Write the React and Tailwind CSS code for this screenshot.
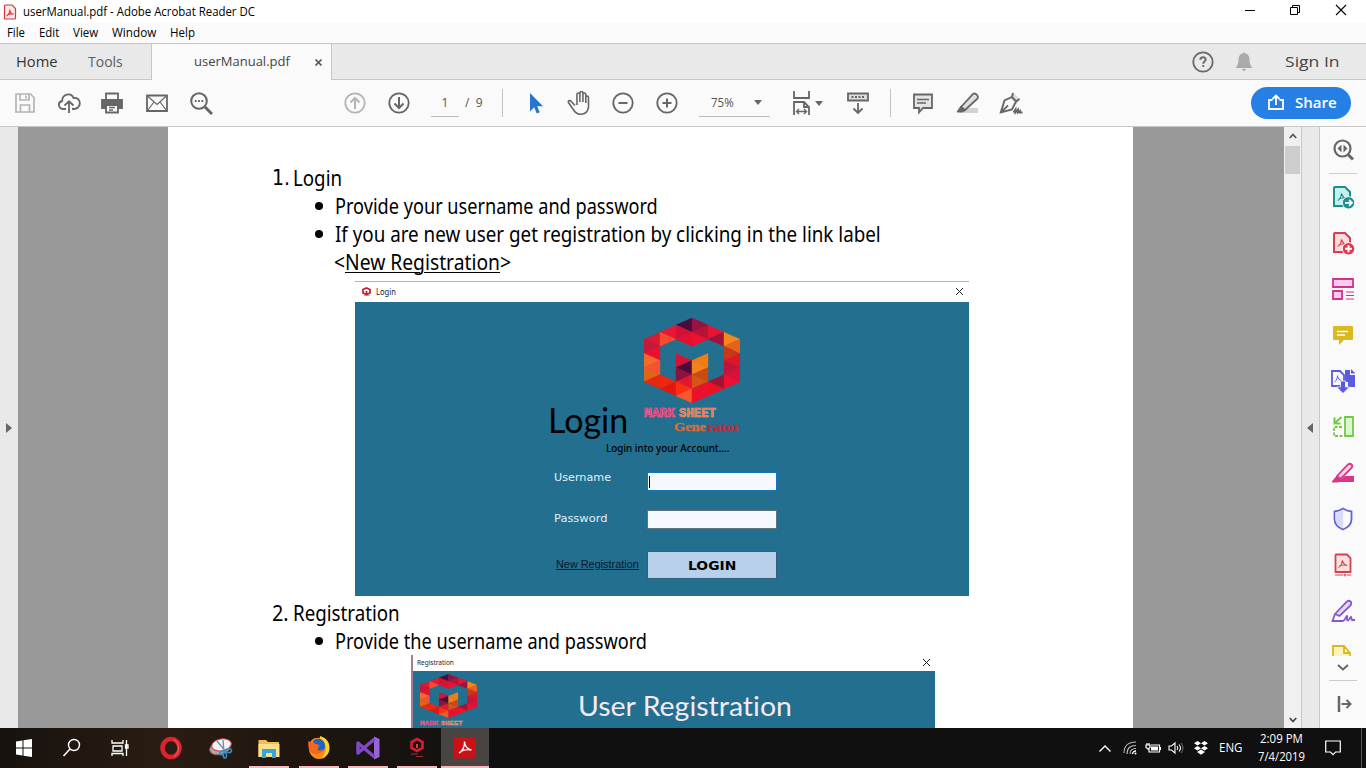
import { useLayoutEffect, useRef, useState } from "react";

/* Single line of text condensed or widened to fill the width of its box. */
function Fit({ className = "", textClass = "", children }) {
  const box = useRef(null);
  const line = useRef(null);
  const [scale, setScale] = useState(1);
  useLayoutEffect(() => {
    setScale(box.current.clientWidth / line.current.offsetWidth);
  }, []);
  return (
    <span ref={box} className={"block shrink-0 whitespace-nowrap " + className}>
      <span ref={line} className={"inline-block origin-left " + textClass} style={{ transform: `scaleX(${scale})` }}>
        {children}
      </span>
    </span>
  );
}

function Svg({ children, className = "size-6", box = "0 0 24 24" }) {
  return (
    <svg viewBox={box} className={"block shrink-0 " + className} fill="none" stroke="currentColor" strokeWidth="1.8">
      {children}
    </svg>
  );
}

const Squiggle = ({ t = "" }) => (
  <path transform={t} strokeWidth="1.1" d="M7.2 15.5c2-1 3.4-3.500 3.800-7.300M11 8.500c.8 2.700 2.500 4.600 5 5.200M8 14.300c2-1.200 5-1.600 8-.8" />
);

const LOGO = [
  { 3: "#d81a35", 4: "#c61938", 5: "#f20d2f", 6: "#f36b2a", 7: "#fa5030", 8: "#e16614", 9: "#e5280f" },
  { 2: "#ea1535", 3: "#f94a2f", 9: "#ef2710", 10: "#e0190f" },
  { 1: "#4c0b3b", 2: "#d01334", 3: "#e3102f", 6: "#d61334", 7: "#4c0b3b", 8: "#8e1338", 9: "#e0182f", 10: "#fa3010", 11: "#f4582c" },
  { 1: "#99123f", 2: "#b71238", 3: "#ee0f32", 6: "#f47a12", 7: "#f6801b", 8: "#c94b13", 9: "#d45612", 10: "#e9132e", 11: "#ee0f28" },
  { 2: "#e51435", 3: "#9e1336", 9: "#a01335", 10: "#ef1025" },
  { 3: "#f7871a", 4: "#e8601b", 5: "#c93718", 6: "#df1528", 7: "#c3133d", 8: "#d8103a", 9: "#ed1033" },
];
const W = 16;
const H = 7.08;

function Logo({ className }) {
  return (
    <svg viewBox="0 0 96 116" preserveAspectRatio="none" className={"block " + className}>
      {LOGO.flatMap((strip, c) =>
        Object.entries(strip).map(([k, color]) => {
          const m = Number(k);
          const leftSide = (m + c) % 2 === 0;
          const a = leftSide ? c : c + 1;
          const b = leftSide ? c + 1 : c;
          return (
            <polygon
              key={c + "-" + m}
              fill={color}
              stroke={color}
              strokeWidth=".4"
              points={`${a * W},${(m - 1) * H} ${a * W},${(m + 1) * H} ${b * W},${m * H}`}
            />
          );
        })
      )}
      <g className="font-['Liberation_Mono'] text-[12px] font-bold" strokeWidth=".6">
        <text x="0" y="99" textLength="31" lengthAdjust="spacingAndGlyphs" fill="#d92b6c" stroke="#ee6b9a">MARK</text>
        <text x="35" y="99" textLength="37" lengthAdjust="spacingAndGlyphs" fill="#e0745a" stroke="#f09a70">SHEET</text>
      </g>
      <g className="font-['Liberation_Serif'] text-[12px] font-bold">
        <text x="30" y="112.500" textLength="32" lengthAdjust="spacingAndGlyphs" fill="#dd6a38" stroke="#dd6a38" strokeWidth=".4">Gene</text>
        <text x="63" y="112.500" textLength="33" lengthAdjust="spacingAndGlyphs" fill="#b3303f" stroke="#b3303f" strokeWidth=".4">rator</text>
      </g>
    </svg>
  );
}

/* Short variant of the logo: the hexagon and its first caption line only. */
function LogoTop({ className }) {
  return (
    <div className={"overflow-hidden " + className}>
      <Logo className="h-[60px] w-[57px]" />
    </div>
  );
}

function TitleBar() {
  return (
    <div className="flex h-[23px] items-center bg-white pl-[3px] text-[12px] text-black">
      <Svg className="h-4 w-3.5 text-[#d8343f]" box="0 0 14 16">
        <path fill="#fde9e9" strokeWidth="1.200" d="M2.500 1h6.500l3.500 3.500V14q0 1-1 1h-9q-1 0-1-1V2q0-1 1-1Z" />
        <path strokeWidth="1.100" d="M3.500 12c2-.8 3.500-4 3.300-6.500M6.800 6c.2 2.500 2 4 4 4.300M4 11.200c2-1.200 4-1.600 6.500-1.200" />
      </Svg>
      <Fit className="ml-[6px] w-[232px]">userManual.pdf - Adobe Acrobat Reader DC</Fit>
      <div className="-mt-1 ml-auto flex items-center pr-[19px]">
        <Svg className="size-3 text-black" box="0 0 12 12"><path strokeWidth="1" d="M1 6.500h10" /></Svg>
        <Svg className="ml-[33px] size-3 text-black" box="0 0 12 12"><path strokeWidth="1" d="M1.500 3.500h7v7h-7zM3.500 3.500v-2h7v7h-2" /></Svg>
        <Svg className="ml-[34px] size-3 text-black" box="0 0 12 12"><path strokeWidth="1.100" d="m1 1 10 10M11 1 1 11" /></Svg>
      </div>
    </div>
  );
}

function MenuBar() {
  return (
    <div className="flex h-5 items-center bg-[#fbfbfb] pl-[7px] text-[12px] text-black">
      <Fit className="w-[18px]">File</Fit>
      <Fit className="ml-[14px] w-5">Edit</Fit>
      <Fit className="ml-[14px] w-[25px]">View</Fit>
      <Fit className="ml-[14px] w-[44px]">Window</Fit>
      <Fit className="ml-[14px] w-[25px]">Help</Fit>
    </div>
  );
}

function TabBar() {
  return (
    <div className="flex h-[37px] border-y border-[#c6c6c6] bg-[#e9e9e9] text-[#444]">
      <div className="flex w-[152px] items-center border-r border-[#c6c6c6] pl-4 text-[14px]">
        <Fit className="w-[42px] text-[#333]">Home</Fit>
        <Fit className="ml-[30px] w-[35px] text-[#5c5c5c]">Tools</Fit>
      </div>
      <div className="-mb-px flex w-[180px] items-center border-r border-[#c6c6c6] bg-[#fafafa] pl-[42px] text-[13px]">
        <Fit className="w-[96px]">userManual.pdf</Fit>
        <Svg className="ml-[24px] size-[9px] text-[#555]" box="0 0 9 9"><path strokeWidth="1.700" d="m1.500 1.500 6 6M7.500 1.500l-6 6" /></Svg>
      </div>
      <div className="ml-auto flex items-center">
        <Svg className="size-6 text-[#6a6a6a]"><circle cx="12" cy="12" r="9.700" /><path strokeWidth="1.900" d="M9.300 9.800c.1-3.400 5.400-3.400 5.400-.3 0 2-2.500 1.900-2.500 4.300M12.200 15v2" /></Svg>
        <Svg className="ml-[17px] size-6 text-[#aaa]"><path fill="currentColor" stroke="none" d="M10.500 3.500q1.500-2 3 0c3 .8 4 3 4 6 0 4 .8 6 3 8.500h-17c2.200-2.500 3-4.500 3-8.500 0-3 1-5.200 4-6ZM9.700 19h4.600q-2.300 4-4.600 0Z" /></Svg>
        <Fit className="mr-[26px] ml-[29px] w-[55px] text-[15px] text-[#444]">Sign In</Fit>
      </div>
    </div>
  );
}

const Caret = ({ className }) => (
  <Svg className={"h-[5px] w-2 text-[#666] " + className} box="0 0 8 5"><path fill="currentColor" stroke="none" d="M0 0h8L4 5Z" /></Svg>
);

function Toolbar() {
  return (
    <div className="flex h-[47px] items-center border-b border-[#c8c8c8] bg-[#fafafa] pl-[13px] text-[#666]">
      <div className="flex gap-5">
        <Svg className="size-6 text-[#b4b4b4]"><path strokeWidth="1.700" d="M3 3h14.500L21 6.500V21H3ZM7 3v6h9V3M13 4.500v3M7.500 21v-7h9v7" /></Svg>
        <Svg><path d="M9 18H6c-5-.5-5.600-7-.8-8C5 3 14 1 16.500 7c6-1.200 8 6 4.500 9.300-1 1.200-2.500 1.700-6 1.700M12 22V11M7.500 14.500 12 10.300l4.500 4.200" /></Svg>
        <Svg className="ml-[-1px] size-6"><path fill="currentColor" d="M2 9h20v8h-4v-3H6v3H2Z" /><path d="M6 8V2.500h12V8M6 14v7.500h12V14" /><path strokeWidth="1.300" d="M9 16.500h6M9 19h4" /></Svg>
        <Svg className="ml-px size-6"><path d="M2 4.500h20v15.500H2Z" /><path strokeWidth="1.200" d="m2.500 5 9.500 8.500L21.500 5M2.500 19.500 9 11M21.500 19.500 15 11" /></Svg>
        <Svg><circle cx="10" cy="10" r="7.800" strokeWidth="2" /><path strokeWidth="3" d="m16 16 7 7" /><path strokeWidth="1.800" d="M5.800 10h1.800m1.500 0h1.800m1.500 0h1.800" /></Svg>
      </div>
      <Svg className="ml-[130px] size-6 text-[#b4b4b4]"><circle cx="12" cy="12" r="9.700" /><path strokeWidth="2" d="M12 18V7M7.500 11.500 12 7l4.500 4.500" /></Svg>
      <Svg className="ml-5 size-6"><circle cx="12" cy="12" r="9.700" /><path strokeWidth="2" d="M12 6v11M7.500 12.500 12 17l4.500-4.500" /></Svg>
      <div className="ml-5 flex h-7 w-7 justify-center border-b border-[#bbb] pt-[5px] text-[12px] leading-[18px] text-[#555]">1</div>
      <Fit className="ml-[6px] w-[18px] text-[12px] text-[#555]">/&nbsp; 9</Fit>
      <div className="ml-[19px] h-7 w-px bg-[#c4c4c4]" />
      <Svg className="ml-5 size-6 text-[#2775cf]"><path fill="currentColor" stroke="none" d="M7 2v18.500l4.200-4.200 2.600 6.200 3-1.300-2.700-5.900H20Z" /></Svg>
      <Svg className="ml-5 size-6"><path strokeWidth="1.600" d="M8 14.500 4 10.200c-1.200-1.300-3.500-.2-2.400 1.500L7 19.500c2 3 4 4 7.500 3.700 4-.3 6.500-3 7-7V6.500c0-2-2.700-2-2.700 0V12 3.500c0-2-2.900-2-2.900 0V11 2c0-2-3-2-3 0v9V3.500c0-2-3-2-3 0L10 14" /></Svg>
      <Svg className="ml-5 size-6"><circle cx="12" cy="12" r="9.700" /><path strokeWidth="2" d="M7.500 12h9" /></Svg>
      <Svg className="ml-5 size-6"><circle cx="12" cy="12" r="9.700" /><path strokeWidth="2" d="M7.500 12h9M12 7.500v9" /></Svg>
      <div className="ml-5 flex h-7 w-[71px] items-center border-b border-[#bbb] pl-3">
        <Fit className="w-[23px] text-[12px] text-[#555]">75%</Fit>
        <Caret className="ml-5" />
      </div>
      <Svg className="ml-5 size-6"><path d="M4 0v7h15V0M4 24V11h10l5 5v8M14 11v5h5" /><path strokeWidth="1.400" d="M7 20.500h9M9 18l-2.500 2.500L9 23M14 18l2.500 2.500L14 23" /></Svg>
      <Caret className="ml-px" />
      <Svg className="ml-[23px] size-6"><path fill="#ddd" d="M2 2.500h20v7H2Z" /><path d="M12 12v10M7.500 17.500 12 22l4.500-4.500" /><path strokeWidth="2" strokeDasharray="2 1.500" d="M5.500 6h13.500" /></Svg>
      <div className="ml-5 h-7 w-px bg-[#c4c4c4]" />
      <Svg className="ml-5 size-6"><path fill="#e4e4e4" d="M3 3.500h18v13.500H12l-4 4.500V17H3Z" /><path strokeWidth="1.300" d="M6 8.500h12M6 12h9" /></Svg>
      <Svg className="ml-5 size-6"><path stroke="none" fill="#d2d2d2" d="M10 17h13v5H5Z" /><path fill="#dedede" d="M6 16 18 3q2-1.500 4 1t0 4L10 19Z" /><path fill="currentColor" strokeWidth="1" d="m6 15 4.500 4.500L7 21H2Z" /></Svg>
      <Svg className="ml-5 size-6"><path fill="#dcdcdc" stroke="none" d="m14 2 7 6-3 5-8-6Z" /><path strokeWidth="1.900" d="M14 2 13 6l4 4.500 3.500-2.500M13 6 5.500 9.500 1.800 21.500 13 18.500l4-8M2 21.300l7-7M14.500 21.500l2-3v3l2.500-3v3l2-1.500v1.500h2.500" /></Svg>
      <button className="ml-[228px] flex h-8 w-[100px] items-center rounded-full bg-[#267fe5] pl-[17px] text-white">
        <Svg className="-mt-0.5 size-4" box="0 0 16 16"><path d="M4.500 6H1v9h14V6h-3.500M8 11V2M4.500 5 8 1.500 11.500 5" /></Svg>
        <Fit className="-mt-0.5 ml-[9px] w-[42px] text-[14px] font-semibold">Share</Fit>
      </button>
    </div>
  );
}

const Close = ({ className }) => (
  <Svg className={"size-[7px] text-[#222] " + className} box="0 0 7 7"><path strokeWidth="1" d="m0 0 7 7M7 0 0 7" /></Svg>
);

function Bullet({ children, className }) {
  return (
    <div className="flex h-7 items-center pl-[42px]">
      <span className="mr-[12px] ml-[0.5px] size-2 rounded-full bg-black" />
      <Fit className={className}>{children}</Fit>
    </div>
  );
}

function LoginShot() {
  return (
    <div className="mt-[6px] ml-[83px] flex h-[315px] w-[614px] flex-col border-t border-[#d3a0b0] bg-white">
      <div className="flex h-5 shrink-0 items-center pl-[7px]">
        <Svg className="-mt-0.5 size-[9px] text-[#c4202f]" box="0 0 9 9"><path strokeWidth="1.800" d="M4.500 1 8 2.500V6L4.500 7.500 1 6V2.500ZM4.500 4v3" /><path strokeWidth=".6" d="M2 8.700h6" /></Svg>
        <Fit className="ml-[5px] w-[20px] text-[8px] text-[#222]">Login</Fit>
        <Close className="-mt-0.5 mr-[6px] ml-auto" />
      </div>
      <div className="grow bg-[#226f90] pt-4">
        <div className="flex h-[118px]">
          <Fit className="mt-[81px] ml-[193px] w-[80px] font-['Lato'] text-[34px] leading-[42px] text-black">Login</Fit>
          <Logo className="ml-4 h-[116px] w-[96px]" />
        </div>
        <Fit className="mt-[4px] ml-[251px] w-[123px] text-[11px] leading-4 font-medium text-black">Login into your Account....</Fit>
        <div className="mt-4 flex pl-[199px] font-['DejaVu_Sans'] text-[11px] text-[#e5f0f5]">
          <Fit className="-mt-0.5 w-[57px] leading-4">Username</Fit>
          <div className="ml-[36px] flex h-[19px] w-[130px] items-center border border-[#1475bb] bg-[#f5f8fd] pl-px"><span className="h-3 w-px bg-black" /></div>
        </div>
        <div className="mt-[19px] flex pl-[199px] font-['DejaVu_Sans'] text-[11px] text-[#e5f0f5]">
          <Fit className="mt-px w-[53px] leading-4">Password</Fit>
          <div className="ml-[40px] h-[19px] w-[130px] border border-[#5e7280] bg-[#f5f8fd]" />
        </div>
        <div className="mt-[22px] flex pl-[201px]">
          <Fit className="mt-[5px] w-[83px] font-['Liberation_Sans'] text-[11px] leading-4 text-[#071a24]" textClass="underline">New Registration</Fit>
          <div className="ml-2 flex h-7 w-[130px] items-center justify-center border border-[#345f7c] bg-[#b9d0eb]">
            <Fit className="mt-px w-[48px] font-['DejaVu_Sans'] text-[13px] font-bold text-black">LOGIN</Fit>
          </div>
        </div>
      </div>
    </div>
  );
}

function RegistrationShot() {
  return (
    <div className="ml-[139px] flex h-[73px] w-[524px] flex-col border-l-2 border-[#a57c90] bg-white">
      <div className="flex h-4 shrink-0 items-center pl-1">
        <Fit className="w-[37px] text-[7px] text-[#222]">Registration</Fit>
        <Close className="mt-[-2px] mr-[5px] ml-auto" />
      </div>
      <div className="flex h-[57px] bg-[#226f90] pt-[3px] pl-[7px]">
        <LogoTop className="h-[54px] w-[57px] shrink-0" />
        <Fit className="mt-[13px] ml-[101px] w-[214px] font-['Lato'] text-[27px] leading-[38px] text-[#f5eaf2] [font-variant-ligatures:none]">User Registration</Fit>
      </div>
    </div>
  );
}

function Page() {
  return (
    <div className="w-[965px] overflow-hidden bg-white pt-[37px] pl-[104px] font-['Noto_Sans',sans-serif] text-[21px] leading-7 text-black">
      <div className="flex h-7 items-center">
        <Fit className="w-[18px] font-['DejaVu_Sans']">1.</Fit>
        <Fit className="ml-[3px] w-[49px]">Login</Fit>
      </div>
      <Bullet className="w-[323px]">Provide your username and password</Bullet>
      <Bullet className="w-[546px]">If you are new user get registration by clicking in the link label</Bullet>
      <div className="flex h-[27px] items-center pl-[62px]">
        <Fit className="w-[177px]">&lt;<span className="underline decoration-1 underline-offset-2">New Registration</span>&gt;</Fit>
      </div>
      <LoginShot />
      <div className="mt-[3px] flex h-7 items-center">
        <Fit className="w-[17px]">2.</Fit>
        <Fit className="ml-1 w-[107px]">Registration</Fit>
      </div>
      <Bullet className="w-[312px]">Provide the username and password</Bullet>
      <RegistrationShot />
    </div>
  );
}

const Doc = ({ children, fill }) => (
  <>
    <path fill={fill} strokeWidth="2" d="M4 2h10l5 5v14H3V3q0-1 1-1Z" />
    <Squiggle t="translate(-.500 0)" />
    {children}
  </>
);

const TOOLS = [
  { tint: "text-[#1b8f8d]", art: <Doc fill="#c5f0ef"><circle cx="17.500" cy="17.800" r="6.200" fill="currentColor" stroke="#fafafa" strokeWidth="1" /><path stroke="#fff" d="M14 17.800h6.500M18 14.800l3 3-3 3" /></Doc> },
  { tint: "text-[#d83c4e]", art: <Doc fill="#fbdcdc"><circle cx="17.500" cy="17.800" r="6.200" fill="currentColor" stroke="#fafafa" strokeWidth="1" /><path stroke="#fff" strokeWidth="2" d="M14 17.800h7M17.500 14.300v7" /></Doc> },
  { tint: "text-[#d3318c]", art: <><path fill="#f9cdea" d="M2 2h20v8H2ZM2 14h9v8H2Z" /><path strokeWidth="1.200" d="M15 15h8M15 18.500h8M15 22h8" /></> },
  { tint: "text-[#dbb91f]", art: <><path fill="currentColor" stroke="none" d="M3 3h18q1 0 1 1v12q0 1-1 1h-8l-5 5v-5H3q-1 0-1-1V4q0-1 1-1Z" /><path stroke="#fff" strokeWidth="1.500" d="M6 8.500h11M6 12h8" /></> },
  { tint: "text-[#5a5be0]", art: <><path fill="currentColor" stroke="none" d="M14 1h5v5h5v12h-7v-5h-3Z" /><path fill="currentColor" stroke="none" d="m20 0 4.500 4.500H20Z" /><path fill="#fafafa" d="M1 2h8l4 4v11H1Z" /><path strokeWidth="1" d="M3.500 13c2-1 3-4 3-6.500M6.500 7c.3 2.500 2 4 4 4.500" /><path fill="currentColor" stroke="#fafafa" strokeWidth=".8" d="M9.500 12h5v6h4L12 24.500 5.500 18h4Z" /></> },
  { tint: "text-[#72c944]", art: <><path fill="#dcf7cd" d="M14 2h8v19h-8Z" /><path strokeDasharray="3 1.500" d="M11 12H3v9h9" /><path strokeWidth="2" d="M10.500 2 4 8M3.500 2.500v6h6" /></> },
  { tint: "text-[#dc3588]", art: <><path fill="currentColor" stroke="none" d="M14 15h9v6H7Z" /><path fill="#fad0e5" d="M6 15 17 3.500q2-1.500 3.500 0t0 3.500L9.500 18Z" /><path fill="currentColor" strokeWidth="1" d="m5.500 15.500 4 4L7 21H1Z" /></> },
  { tint: "text-[#6264d8]", art: <><path fill="#fafafa" d="M12 1.500c3 2 5 2.500 8.500 3V12c0 5-3.500 8.500-8.500 10.500C7 20.500 3.500 17 3.500 12V4.500c3.500-.5 5.500-1 8.500-3Z" /><path fill="#d8dafa" stroke="none" d="M12 2.700v18.500C7.500 19 4.500 16 4.500 12V5.500c3-.5 5-1 7.500-2.800Z" /></> },
  { tint: "text-[#d2434e]", art: <><path fill="#fbe0df" d="M5 1.500h11l3.500 3.500v14H4.500V2.500Z" /><Squiggle t="translate(.3 -1)" /><path strokeWidth="1.200" d="M4 22h8m4 0h4" /><circle cx="14" cy="22" r="1" strokeWidth="1" /></> },
  { tint: "text-[#8359cd]", art: <><path fill="#e7d8fb" d="M4 15 16 2.500q2-1.500 3.500 0t0 4L8.500 17Z" /><path d="M4 15 1.500 22H12c2-.5 3-5 4-5s-1 4 .5 4.500S19 18 20 18s0 3 1 3h3" /></> },
];

function SideTools() {
  return (
    <div className="flex w-[47px] flex-col items-center border-l border-[#c8c8c8] bg-[#fafafa]">
      <div className="flex h-[47px] w-7 items-center justify-center border-b border-[#ccc] text-[#666]">
        <Svg><circle cx="11.500" cy="10.500" r="8" strokeWidth="2.200" /><path strokeWidth="3" d="m17 16.500 5 5" /><path fill="currentColor" stroke="none" d="M10.500 6.500v8l-4-4ZM12.500 6.500v8l4-4Z" /></Svg>
      </div>
      {TOOLS.map((tool, i) => (
        <div key={i} className={"flex h-[46px] w-[46px] items-center justify-center " + tool.tint}>
          <Svg>{tool.art}</Svg>
        </div>
      ))}
      <div className="mt-[10px] h-3 w-6 shrink-0 overflow-hidden text-[#d7b91d]">
        <Svg><path fill="#fbf3bd" d="M2 2h11l6 7v12H2ZM13 2v7h6" /></Svg>
      </div>
      <Svg className="mt-2 h-[7px] w-3 text-[#666]" box="0 0 12 7"><path strokeWidth="2" d="m1 1 5 4.500L11 1" /></Svg>
      <div className="mt-[9px] h-px w-7 shrink-0 bg-[#ccc]" />
      <Svg className="mt-[15px] ml-1 h-4 w-4 text-[#666]" box="0 0 16 16"><path strokeWidth="2.500" d="M2 0v16" /><path strokeWidth="2" d="M4.500 8H14M9.500 4l4 4-4 4" /></Svg>
    </div>
  );
}

function Viewer() {
  return (
    <div className="flex h-[601px]">
      <div className="flex w-[18px] items-center justify-center bg-[#e9e9e9]">
        <Svg className="h-2.5 w-1.5 text-[#666]" box="0 0 6 10"><path fill="currentColor" stroke="none" d="M0 0v10l6-5Z" /></Svg>
      </div>
      <div className="flex w-[1266px] bg-[#999] pl-[150px]"><Page /></div>
      <div className="flex w-[17px] flex-col items-center bg-[#f0f0f0]">
        <Svg className="mt-[6px] h-1.5 w-2 text-[#555]" box="0 0 8 6"><path strokeWidth="1.800" d="m.8 5 3.200-3.500L7.200 5" /></Svg>
        <div className="mt-[7px] h-7 w-[15px] bg-[#cdcdcd]" />
        <Svg className="mt-auto mb-[5px] h-[6px] w-2 text-[#444]" box="0 0 8 6"><path strokeWidth="1.800" d="m.8 1 3.200 3.500L7.200 1" /></Svg>
      </div>
      <div className="flex w-[18px] items-center border-l border-[#c8c8c8] bg-[#e9e9e9] pl-[5px]">
        <Svg className="h-2.5 w-1.5 text-[#666]" box="0 0 6 10"><path fill="currentColor" stroke="none" d="M6 0v10L0 5Z" /></Svg>
      </div>
      <SideTools />
    </div>
  );
}

const APPS = [
  <><path fill="#fff" stroke="none" d="m4 5.500 6.500-1v7H4ZM11.500 4.300 20 3v8.500h-8.500ZM4 12.500h6.500v7l-6.500-1ZM11.500 12.500H20V21l-8.500-1.300Z" /></>,
  <><circle cx="14" cy="9" r="5.500" stroke="#fff" strokeWidth="1.400" /><path stroke="#fff" strokeWidth="1.600" d="m10 13-6.500 7" /></>,
  <path stroke="#fff" strokeWidth="1.300" d="M4 4v3h11V4M5 10h9v5H5ZM4 20v-2.500h11V20M18.500 4v16M17.500 9h2.500v3h-2.500Z" />,
  <><ellipse cx="12" cy="12" rx="8.500" ry="9" stroke="#dc2330" strokeWidth="4.500" /><path stroke="#f26269" strokeWidth="1" d="M15 3.500c6 3 6 14 0 17" /></>,
  <><ellipse cx="11" cy="12" rx="10.500" ry="6.500" transform="rotate(-15 11 12)" fill="#aaa" stroke="#985f5f" strokeWidth="1" /><ellipse cx="12.500" cy="9" rx="10" ry="6" transform="rotate(-10 12 9)" fill="#f4f4f4" stroke="#c93443" strokeWidth="1" /><path stroke="#6a8fa6" strokeWidth="1.300" d="m8 5 9 11M14 4l1 12" /><path stroke="#3391c7" strokeWidth="1.600" d="M15.500 15c-4-1-6 3-4 3.500s4-1.500 4-3.500Zm0 0c-2 3-1.500 7 .5 7s2-4-.5-7Zm0 0c2-3 7-3 7-.5s-4 3-7 .5Z" /></>,
  <><path fill="#eebf4c" stroke="none" d="M1.500 4H9l2 2h11v15H1.500Z" /><path fill="#fbe08c" stroke="none" d="M1.500 8h21v13h-21Z" /><path fill="#37a3df" stroke="none" d="M5 13h14v9h-4v-5H9v5H5Z" /></>,
  <><circle cx="12" cy="12.500" r="10" fill="#ee3d24" stroke="none" /><path fill="#ff8a16" stroke="none" d="M2 12C2 4 7 1 14 2c12 3 10 21-2 21C6 23 2 18 2 12Z" /><path fill="#ffd52c" stroke="none" d="M13 0c7 2 10 7 9.500 13-.6 5-4 8-8 9 6-6 5-12 2-16-2-2-4-3-3.500-6Z" /><path fill="#1d64c4" stroke="none" d="M6 5c5-5 13-1 12 6-1 6-8 7-10.500 3L12 12 7 10Z" /><path fill="#f8651f" stroke="none" d="M1.500 5 6 7l4 1 3 2-4 2c1 3 5 3 7 1-1 5-8 7-12 3C1 13 1 8 1.500 5Z" /></>,
  <><path fill="#9a63d8" stroke="none" d="M18 0.500 23.500 3v18L18 23.500Z" /><path stroke="#8049c8" strokeWidth="3.500" strokeLinejoin="round" d="M18.500 3 2 17V7l16.500 14" /></>,
  <><path stroke="#d51d32" strokeWidth="2.600" d="m12 3 5.500 3v6L12 15l-5.500-3V6Z" /><path stroke="#ed3d31" strokeWidth="2" d="M12 8v4" /><path stroke="#93343b" strokeWidth="1.200" d="M6 18h7M11 20.500h7" /></>,
  <><path fill="#c81218" stroke="none" d="M1 1.500h22v21H1Z" /><path stroke="#fff" strokeWidth="1.400" d="M6 17c3.500-1.500 6-7 5.500-11.500M11.500 6c.5 4 3 7 7 8M7 16c3-2 7-3 11.500-2" /></>,
];
const CELLS = [
  "w-12", "w-12", "w-12", "w-[54px]", "w-[46px]",
  "w-[50px]", "w-[49px]", "w-[49px]", "w-[49px]", "w-12 bg-[#474442]",
];

function Taskbar() {
  return (
    <div className="flex h-10 items-stretch bg-[linear-gradient(90deg,#17120e,#2a1c12_12%,#21170f_20%,#101010_36%,#101010)] text-white">
      {APPS.map((art, i) => (
        <div key={i} className={"flex flex-col items-center " + CELLS[i]}>
          <Svg className="mt-2 size-6">{art}</Svg>
          {i > 4 && <div className={"mt-auto h-0.5 bg-[#f6b8bd] " + (i === 9 ? "w-12" : "w-10")} />}
        </div>
      ))}
      <div className="ml-auto flex items-center">
        <Svg className="h-[7px] w-3" box="0 0 12 7"><path strokeWidth="1.400" d="m.5 6.500 5.500-5.500 5.500 5.500" /></Svg>
        <Svg className="ml-3 size-3.5" box="0 0 14 14"><path strokeWidth="1.100" stroke="#bbb" d="M1 12C1 5 5 1 13 1M4 13C4 7 7 4.500 13 4.500M7 13c0-3.500 2-5.500 6-5.500" /><path strokeWidth="1.500" d="M9.500 13c0-1.500 1.500-3 3.500-3" /><circle cx="12.500" cy="12.500" r="1" fill="#fff" stroke="none" /></Svg>
        <Svg className="ml-[8px] h-3 w-4" box="0 0 16 12"><path strokeWidth="1.200" d="M6 3h8.500v7H4V7M1 3h4v2.500L3 7 1 5.500ZM2 1v2M4 1v2M15.500 5v3" /><path fill="#fff" stroke="none" d="M6 4.500h7v4H6Z" /></Svg>
        <Svg className="ml-[7px] h-3.5 w-4" box="0 0 16 14"><path strokeWidth="1.100" d="M1 5h2.500L7 2v10L3.500 9H1ZM9 5q1.500 2 0 4M11 3.500q3 3.500 0 7" /><path stroke="#777" strokeWidth="1" d="M13 2q4 5 0 10" /></Svg>
        <Svg className="ml-[9px] size-4" box="0 0 16 16"><path fill="#fff" stroke="none" d="m4.500 1 3.500 2.300L4.500 5.600 1 3.300ZM11.500 1 15 3.300l-3.500 2.300L8 3.300ZM4.500 6 8 8.300l-3.500 2.300L1 8.300ZM11.500 6 15 8.300l-3.500 2.300L8 8.300ZM8 9.500l4 2.500-4 2.700L4 12Z" /></Svg>
        <Fit className="ml-[10px] w-[23px] text-[12px]">ENG</Fit>
        <div className="ml-[16px] flex w-[47px] flex-col items-center text-[12px] leading-[18px]">
          <Fit className="w-[43px]">2:09 PM</Fit>
          <Fit className="w-[47px]">7/4/2019</Fit>
        </div>
        <Svg className="ml-5 size-4" box="0 0 16 16"><path strokeWidth="1.200" d="M.7 1h14.600v11H10.500L8 14.700 5.500 12H.7Z" /></Svg>
        <div className="ml-[20px] h-10 w-px bg-[#555]" />
        <div className="w-1" />
      </div>
    </div>
  );
}

export default function App() {
  return (
    <div className="h-[768px] w-[1366px] overflow-hidden bg-white font-['Open_Sans',sans-serif]">
      <TitleBar />
      <MenuBar />
      <TabBar />
      <Toolbar />
      <Viewer />
      <Taskbar />
    </div>
  );
}
